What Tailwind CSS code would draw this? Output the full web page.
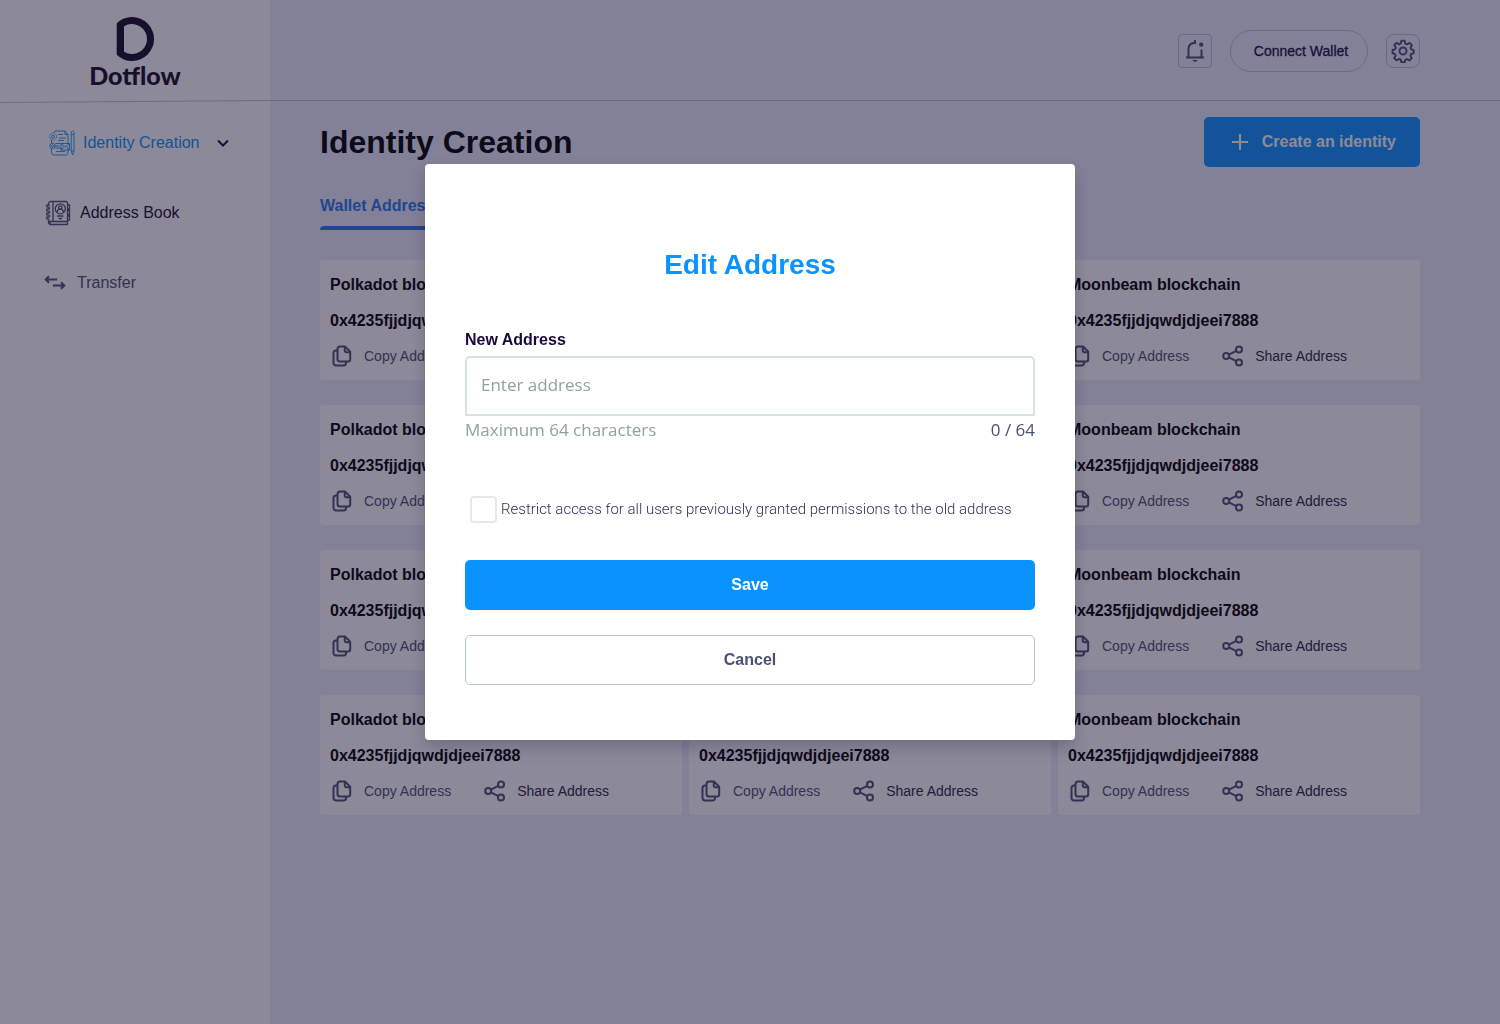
<!DOCTYPE html>
<html lang="en">
<head>
<meta charset="utf-8">
<meta name="viewport" content="width=device-width, initial-scale=1">
<title>Dotflow – Identity Creation</title>
<script src="https://cdn.jsdelivr.net/npm/@tailwindcss/browser@4"></script>
</head>
<body class="min-h-screen bg-[#eceefc] font-['Liberation_Sans',Arial,sans-serif] text-base text-black">

<svg class="hidden" aria-hidden="true">
  <symbol id="copy" viewBox="0 0 24 24" fill="none" stroke="currentColor" stroke-width="2" stroke-linejoin="round" stroke-linecap="round">
    <path d="M10 2.500h5l5.200 5.200v7.800a2 2 0 0 1-2 2H10a2.500 2.500 0 0 1-2.500-2.500V5A2.500 2.500 0 0 1 10 2.500z"/>
    <path d="M14.800 3v3.800a1.500 1.500 0 0 0 1.500 1.500h3.700"/>
    <path d="M7 6.500H6A2.500 2.500 0 0 0 3.500 9v10A2.500 2.500 0 0 0 6 21.500h7.500a2.500 2.500 0 0 0 2.500-2.500v-1"/>
  </symbol>
  <symbol id="share" viewBox="0 0 24 24" fill="none" stroke="currentColor" stroke-width="2">
    <circle cx="5.200" cy="12" r="3"/><circle cx="18" cy="5.500" r="3"/><circle cx="18" cy="18.500" r="3"/>
    <path d="M7.900 10.600 15.300 6.900M7.900 13.400l7.400 3.700"/>
  </symbol>
</svg>

<div class="flex min-h-screen">
  <aside class="w-[270px] shrink-0 bg-white">
    <a href="#" class="flex h-[100px] flex-col items-center pt-[17px]" aria-label="Dotflow">
      <svg class="h-[44px] w-[38px] shrink-0" viewBox="0 0 38 44" fill="#140c24">
        <path fill-rule="evenodd" d="M.7 6.200A22 22 0 1 1 .7 37.800zM8 9.300v25.400A15 15 0 1 0 8 9.300z"/>
      </svg>
      <span class="font-[Lato,sans-serif] text-[25px] leading-7 font-black text-[#140c24]">Dotflow</span>
    </a>
    <svg class="block h-[3px] w-full" viewBox="0 0 270 3" preserveAspectRatio="none"><path d="M0 2.500 270 .5" stroke="#b3c9c7"/></svg>
    <nav class="flex flex-col gap-[46px] pt-7">
      <a href="#" class="flex h-6 items-center pl-[49px] text-[#0a93ff]">
        <svg class="mr-2 size-[26px]" viewBox="0 0 26 26" fill="none" stroke="currentColor" stroke-width=".9">
          <path d="M5 2.500 6 1h10l3 3.500v9M16 1v3.500h3M2.500 10v3M2.500 18.500V23l1.500 2h13.500l1.500-1.500V20M6.500 13.500h5.500M6.500 18h5.500"/>
          <circle cx="4" cy="6.500" r="3.500" stroke-dasharray="1.500 .7"/><circle cx="4" cy="6.500" r="1.400"/>
          <circle cx="3.500" cy="16" r="2.700"/><circle cx="3.500" cy="16" r="1"/>
          <path d="M12 13.500h8.500V20H12zM12 13.500l4.200 3.500 4.300-3.500M12 20l3-3.500M20.500 20l-3-3.500M9 4.500h5M10 8h7M9 10.500h6M7 21.500h9M5.500 16h5M22.200 2.500c0-2 2.800-2 2.800 0V21l-1.400 4-1.400-4zM22.200 4.500H25M22.200 21H25"/>
        </svg>
        <span>Identity Creation</span>
        <svg class="ml-4 size-[14px]" viewBox="0 0 14 14" fill="none" stroke="#160b3c" stroke-width="2"><path d="m2 4.500 5 5 5-5"/></svg>
      </a>
      <a href="#" class="flex h-6 items-center pl-[45px] text-[#140f2b]">
        <svg class="mr-[9px] size-[26px]" viewBox="0 0 26 26" fill="none" stroke="#4b5170" stroke-width="1.300">
          <path d="M5 1.500h16.500l1 1V24.500H5L3.500 23v-3M3.500 6V3L5 1.500M3.500 21.500h19M8 1.500v20M5 24.500V22"/>
          <path d="M4.500 5H2.500a1 1 0 0 0 0 2.200h2M4.500 9H2.500a1 1 0 0 0 0 2.200h2M4.500 13H2.500a1 1 0 0 0 0 2.200h2M4.500 17H2.500a1 1 0 0 0 0 2.200h2M4.500 7.200V9M4.500 11.200V13M4.500 15.200V17M22.500 5h2v4h-2M22.500 10.500h2v4h-2M22.500 16h2v4h-2"/>
          <circle cx="15.300" cy="8.800" r="5"/><circle cx="15.300" cy="7.500" r="1.700"/>
          <path d="M12.300 12.200c0-4 6-4 6 0M12 16h6.500M13.500 18.500h3.500"/>
        </svg>
        <span>Address Book</span>
      </a>
      <a href="#" class="flex h-6 items-center pl-[44px] text-[#4b5170]">
        <svg class="mr-[11px] h-4 w-[22px]" viewBox="0 0 22 16" fill="none" stroke="currentColor" stroke-width="2"><path d="M2 4.500h11M5 1.200 1.700 4.500 5 7.800M9 10.500h11M17 7.200l3.300 3.300-3.300 3.300"/></svg>
        <span>Transfer</span>
      </a>
    </nav>
  </aside>

  <div class="min-w-0 flex-1">
    <header class="flex h-[101px] items-center justify-end gap-[18px] border-b border-[#b3c9c7] pt-0.5 pr-20 text-[#4b5170]">
      <button class="flex size-[34px] items-center justify-center rounded-[4px] border border-[#b3c9c7]" aria-label="Notifications">
        <svg class="size-6" viewBox="0 0 24 24" fill="none" stroke="currentColor" stroke-width="2"><path d="M3 18.500h18M5.500 18.500V10c0-3.800 2.600-6 6.900-6.200M12 1v4M18.500 10.500v8"/><path d="M9.500 21h5c-.5 1-1.500 1.800-2.500 1.800S10 22 9.500 21z" fill="currentColor" stroke="none"/><circle cx="18.200" cy="5.600" r="2.200" fill="currentColor" stroke="none"/></svg>
      </button>
      <button class="h-[42px] w-[138px] rounded-[21px] border border-[#b3c9c7] pl-1 text-sm text-[#160b3c] [-webkit-text-stroke:0.3px]">Connect Wallet</button>
      <button class="flex size-[34px] items-center justify-center rounded-[8px] border border-[#b3c9c7]" aria-label="Settings">
        <svg class="size-6" viewBox="0 0 24 24" fill="none" stroke="currentColor" stroke-width="2" stroke-linejoin="round"><path d="M10.300 1.800h3.400l.7 3 1.900.9 2.700-1.600 2.400 2.400-1.500 2.700.8 1.800 2.500.7v3.400l-2.700.7-.8 1.900 1.500 2.500-2.400 2.400-2.600-1.500-1.800.8-.7 2.600h-3.400l-.7-2.700-1.900-.8-2.500 1.500-2.400-2.400 1.500-2.600-.8-1.800-2.500-.7v-3.400l2.600-.7.8-1.900-1.500-2.600 2.400-2.400 2.600 1.600 1.800-.9z" transform="translate(.6 0) scale(.95)"/><circle cx="12" cy="12" r="3.500"/></svg>
      </button>
    </header>

    <main class="pr-20 pl-[50px] pt-4 pb-10">
      <div class="flex items-center justify-between">
        <h1 class="text-[32px] leading-10 font-bold">Identity Creation</h1>
        <button class="flex h-[50px] items-center rounded-[5px] bg-[#0a93ff] pr-6 pl-[27px] font-bold text-white">
          <svg class="mr-[13px] size-[18px]" viewBox="0 0 18 18" stroke="currentColor" stroke-width="2"><path d="M9 1v16M1 9h16"/></svg>
          Create an identity
        </button>
      </div>
      <div class="mt-[27px] flex">
        <a href="#" class="font-bold text-[#2b77e6]"><span class="block h-8 leading-6">Wallet Address</span><span class="block h-1 rounded-t-[4px] bg-[#2b77e6]"></span></a>
      </div>
      <div id="cards" class="mt-[30px] grid grid-cols-3 gap-x-[7px] gap-y-[25px]"></div>
    </main>
  </div>
</div>

<div class="fixed inset-0 flex items-start justify-center overflow-auto bg-[#191333]/50 px-4 pt-[164px]">
  <form role="dialog" aria-modal="true" aria-labelledby="dialog-title" class="w-full max-w-[650px] rounded-[4px] bg-white px-10 pt-[83px] pb-[55px] shadow-[0_8px_16px_rgba(20,12,50,0.2)]">
    <h2 id="dialog-title" class="text-center text-[28px] leading-9 font-bold text-[#0a93ff]">Edit Address</h2>
    <label for="address" class="mt-[45px] block leading-6 font-bold text-[#160b3c]">New Address</label>
    <input id="address" type="text" maxlength="64" placeholder="Enter address" class="mt-1 block h-[60px] w-full rounded-t-[5px] border-2 border-[#d6e3e3] px-[14px] pb-1 font-['Open_Sans',sans-serif] text-[17px] placeholder:text-[#8fa39e]">
    <div class="mt-0.5 flex justify-between font-['Open_Sans',sans-serif] text-[17px] leading-6 text-[#8fa39e]">
      <span>Maximum 64 characters</span><span class="text-[#4b5170]">0 / 64</span>
    </div>
    <label class="mt-[54px] flex items-center gap-1 pl-[5px] font-[Roboto,sans-serif] text-[15px] font-light text-[#2c3552]">
      <input type="checkbox" class="size-[27px] shrink-0 appearance-none rounded-[4px] border-2 border-[#e8e8e8] bg-white checked:bg-[#0a93ff]">
      <span>Restrict access for all users previously granted permissions to the old address</span>
    </label>
    <button type="submit" class="mt-[37px] block h-[50px] w-full rounded-[5px] bg-[#0a93ff] font-bold text-white">Save</button>
    <button type="button" class="mt-[25px] block h-[50px] w-full rounded-[5px] border border-[#b3c9c7] font-bold text-[#4b5170]">Cancel</button>
  </form>
</div>

<script>
  const chains = ["Polkadot", "Polkadot", "Moonbeam"];
  document.getElementById("cards").innerHTML = Array.from({ length: 12 }, (_, i) => `
    <article class="h-[120px] rounded-[4px] bg-white px-[10px] pt-[13px]">
      <h3 class="font-bold leading-6">${chains[i % 3]} blockchain</h3>
      <p class="mt-3 font-bold leading-6">0x4235fjjdjqwdjdjeei7888</p>
      <div class="mt-[11px] flex gap-8 text-sm text-[#4b5170]">
        <button class="flex items-center gap-[10px]"><svg class="size-6"><use href="#copy"/></svg>Copy Address</button>
        <button class="flex items-center gap-[10px]"><svg class="size-6"><use href="#share"/></svg><span class="text-[#2a2440]">Share Address</span></button>
      </div>
    </article>`).join("");
</script>
</body>
</html>
